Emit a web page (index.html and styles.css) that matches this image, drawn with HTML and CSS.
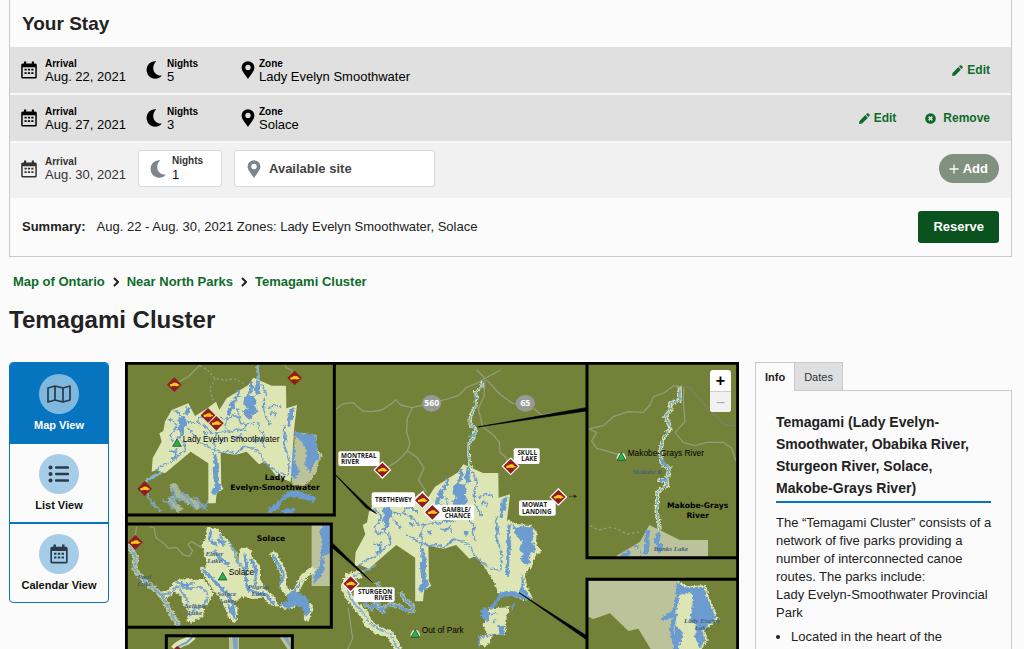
FILE: index.html
```html
<!DOCTYPE html>
<html lang="en">
<head>
<meta charset="utf-8">
<meta name="viewport" content="width=device-width, initial-scale=1">
<title>Temagami Cluster</title>
<link rel="stylesheet" href="styles.css">
</head>
<body>
<svg class="sprite" aria-hidden="true">
  <symbol id="i-cal" viewBox="0 0 16 18">
    <path fill-rule="evenodd" d="M3 .500h2.200V2.500h5.600V.500H13v2h1.300A1.500 1.500 0 0 1 15.800 4v12a1.500 1.500 0 0 1-1.500 1.500H1.700A1.500 1.500 0 0 1 .200 16V4a1.500 1.500 0 0 1 1.500-1.500H3zM1.700 6.300V16h12.600V6.300z"/>
    <path d="M3.500 7.800h2.200v1.800H3.500zm3.400 0h2.200v1.800H6.900zm3.400 0h2.200v1.800h-2.200zM3.500 11.200h2.200V13H3.500zm3.400 0h2.200V13H6.900zm3.400 0h2.200V13h-2.200z"/>
  </symbol>
  <symbol id="i-moon" viewBox="0 0 16 18"><path d="M10.300.300C4.800-.400.600 3.800.600 9c0 5 3.900 8.700 8.500 8.700 2.800 0 5.100-1.100 6.700-3.200-7.600.900-11.800-8.300-5.500-14.200z"/></symbol>
  <symbol id="i-pin" viewBox="0 0 14 18"><path fill-rule="evenodd" d="M7 .200a6.400 6.400 0 0 1 6.400 6.400C13.400 10.200 10 13.300 7 18 4 13.300.600 10.200.600 6.600A6.400 6.400 0 0 1 7 .200zm0 3.600a2.700 2.700 0 1 0 0 5.400 2.700 2.700 0 0 0 0-5.400z"/></symbol>
  <symbol id="i-pen" viewBox="0 0 12 12"><path d="M0 12l.600-3.400L6.900 2.300 9.700 5.100 3.400 11.400zM7.700 1.500l.900-.900a1.300 1.300 0 0 1 1.800 0l1 1a1.300 1.300 0 0 1 0 1.800l-.900.900z"/></symbol>
  <symbol id="i-x" viewBox="0 0 12 12"><circle cx="6" cy="6" r="5.800"/><path d="M4 4l4 4M8 4l-4 4" stroke="#e0e0e0" stroke-width="1.800"/></symbol>
</svg>

<section class="stay">
  <h2 class="stay-title">Your Stay</h2>
  <div class="row">
    <div class="cell"><svg class="ico16"><use href="#i-cal"/></svg><div class="pair"><b>Arrival</b><span>Aug. 22, 2021</span></div></div>
    <div class="cell nights"><svg class="ico16"><use href="#i-moon"/></svg><div class="pair"><b>Nights</b><span>5</span></div></div>
    <div class="cell zone"><svg class="ico14"><use href="#i-pin"/></svg><div class="pair"><b>Zone</b><span>Lady Evelyn Smoothwater</span></div></div>
    <div class="actions"><button class="link" type="button"><svg><use href="#i-pen"/></svg>Edit</button></div>
  </div>
  <div class="row">
    <div class="cell"><svg class="ico16"><use href="#i-cal"/></svg><div class="pair"><b>Arrival</b><span>Aug. 27, 2021</span></div></div>
    <div class="cell nights"><svg class="ico16"><use href="#i-moon"/></svg><div class="pair"><b>Nights</b><span>3</span></div></div>
    <div class="cell zone"><svg class="ico14"><use href="#i-pin"/></svg><div class="pair"><b>Zone</b><span>Solace</span></div></div>
    <div class="actions"><button class="link" type="button"><svg><use href="#i-pen"/></svg>Edit</button><button class="link remove" type="button"><svg><use href="#i-x"/></svg>Remove</button></div>
  </div>
  <div class="row draft">
    <div class="cell"><svg class="ico16"><use href="#i-cal"/></svg><div class="pair"><b>Arrival</b><span>Aug. 30, 2021</span></div></div>
    <div class="field nights-field"><svg class="ico16"><use href="#i-moon"/></svg><div class="pair"><label for="nights">Nights</label><input id="nights" type="text" value="1"></div></div>
    <button class="field site-field" type="button"><svg class="ico14"><use href="#i-pin"/></svg>Available site</button>
    <button class="add" type="button"><svg viewBox="0 0 10 10"><path d="M5 .500v9M.500 5h9" stroke="#fff" stroke-width="1.300"/></svg>Add</button>
  </div>
  <div class="summary">
    <p><b>Summary:</b><span>Aug. 22 - Aug. 30, 2021 Zones: Lady Evelyn Smoothwater, Solace</span></p>
    <button class="reserve" type="button">Reserve</button>
  </div>
</section>

<nav class="crumbs" aria-label="Breadcrumb">
  <a href="#ontario">Map of Ontario</a>
  <svg viewBox="0 0 6 10"><path d="M1 1l4 4-4 4"/></svg>
  <a href="#north">Near North Parks</a>
  <svg viewBox="0 0 6 10"><path d="M1 1l4 4-4 4"/></svg>
  <a href="#temagami">Temagami Cluster</a>
</nav>
<h1>Temagami Cluster</h1>

<main class="content">
  <div class="views">
    <button class="view active" type="button"><span class="disc"><svg viewBox="0 0 24 18"><path d="M1 3l7-2 8 2 7-2v14l-7 2-8-2-7 2zM8 1v14M16 3v14" fill="none" stroke="#2b3a47" stroke-width="1.700" stroke-linejoin="round"/></svg></span>Map View</button>
    <button class="view" type="button"><span class="disc"><svg viewBox="0 0 24 18"><g fill="#2b3a47"><circle cx="3.500" cy="2.500" r="2"/><circle cx="3.500" cy="9" r="2"/><circle cx="3.500" cy="15.500" r="2"/><rect x="8" y="1.300" width="14" height="2.500" rx="1"/><rect x="8" y="7.800" width="14" height="2.500" rx="1"/><rect x="8" y="14.300" width="14" height="2.500" rx="1"/></g></svg></span>List View</button>
    <button class="view" type="button"><span class="disc"><svg class="cal"><use href="#i-cal"/></svg></span>Calendar View</button>
  </div>

  <div class="map">
    <svg class="map-art" viewBox="0 0 1842 861" role="img" aria-label="Temagami Cluster map">
      <defs>
        <filter id="shore" x="-5%" y="-5%" width="110%" height="110%" color-interpolation-filters="sRGB"><feTurbulence type="fractalNoise" baseFrequency=".12" numOctaves="2" seed="4"/><feDisplacementMap in="SourceGraphic" scale="14" xChannelSelector="R" yChannelSelector="G"/></filter>
        <symbol id="access" viewBox="-24 -24 48 48" overflow="visible">
          <path d="M0-22 22 0 0 22-22 0z" fill="#911b1f"/>
          <path d="M-14 1q2-4 6-3 5-6 12-4 5 0 6 4l5 2v3h-5l-2 3-3-2H-6l-3 2-3-2z" fill="#f8cc16"/>
        </symbol>
        <symbol id="tri" viewBox="-20 -20 40 40" overflow="visible">
          <path d="M-8-10h16l6 12v9h-28V2z" fill="#d9efd0"/>
          <path d="M0-12 13 11H-13z" fill="#2bb04b" stroke="#12321a" stroke-width="2"/>
        </symbol>
        <path id="land" d="M400 68 455 92H498L499 160 531 150 522 225 512 380 470 365 440 325 430 322 417 328 380 290 345 300 302 292 304 390 310 402 290 415 287 445H265V325L212 290 135 355 110 345 95 350 98 310 125 260 118 235 130 228 135 200 155 165 205 145 225 183 262 160 288 140 298 165 320 130 385 90z"/>
        <g id="lakes" fill="#6b9bcf" stroke="#6b9bcf" filter="url(#shore)">
          <path d="M372 128 385 120 404 124 410 142 404 150 412 172 398 180 390 196 378 186 366 168 384 160 370 148zM386 84 398 76 400 96 396 114 384 118 388 100zM410 76 422 88 416 104 420 116 408 120 404 100zM332 138 346 134 348 158 336 166 334 178 320 184 318 168 328 158zM174 192 184 184 196 188 202 210 190 222 182 238 170 222 178 210zM198 154 210 160 204 182 192 178zM508 165 524 158 520 190 508 204 504 190zM278 336 292 330 296 345 294 362 286 385 280 370zM284 388 296 384 308 396 300 408 290 410 282 422 276 410zM400 250 412 252 408 268z" stroke="none"/>
          <g fill="none" stroke-width="4">
            <path d="M160 165 175 172 190 192 216 205 238 205 260 216 268 230 286 236 308 228 330 232 350 222 372 226 380 206 404 205M140 190 158 196 170 212 162 230 150 240 160 262 176 254 190 258 196 285 178 300 160 318 130 330 110 345M350 160 362 188 360 205 378 208M425 88 440 120 430 140 432 170 440 190 452 210M290 236 280 262 286 276 280 300 284 330M300 190 320 192 342 180 360 190M240 262 258 272 276 282 302 292 325 288 345 298 360 285 380 276 400 280 420 292 432 320 455 340 470 350 500 362M444 162 455 152 474 150 484 158M450 178 458 170 470 175 462 186M412 200 418 225 432 238 425 255 432 276M232 200 238 188 250 184 270 200M325 190 315 210 322 228M205 220 215 232 226 244M498 210 490 225 500 245 490 262 500 290 508 310 505 360M335 245 350 250 362 240 370 258M148 285 160 290 172 282"/>
          </g>
          <g fill="none" stroke-width="8"><path d="M190 185 184 215 190 235 175 250M392 122 388 158M284 300 290 320 288 345 292 400M170 290 165 305 158 312M516 165 510 190 506 215M352 105 356 122 345 135M250 232 262 238M375 270 362 285M300 250 312 258M492 235 496 262"/></g>
        </g>
      </defs>
      <rect width="1842" height="861" fill="#748139"/>

      <!-- Central map -->
      <g class="road" transform="translate(615 -21)">
        <path d="M15 165 40 146 70 143 98 168 125 170 155 165 185 146 197 134 212 150 245 158 280 150 345 134 385 122 408 98 440 85 465 70 440 45M465 70 512 45M247 158 232 190 230 230 240 265 232 288 200 320 175 335M232 288 262 308 282 340 265 375 290 412M465 75 462 125 445 160 458 215 490 240 508 262 510 292 530 310 530 335"/>
        <path d="M470 75 512 120 548 145 600 150 634 180 670 175"/>
        <path d="M55 760 62 810 68 850 52 885"/>
      </g>
      <g transform="translate(615 -21)" fill="none" filter="url(#shore)"><path d="M458 78 455 95 437 112 440 130 437 155 422 180 420 212 438 222 430 250 414 268 415 300 422 345" stroke="#dde5b5" stroke-width="10"/><path d="M458 78 455 95 437 112 440 130 437 155 422 180 420 212 438 222 430 250 414 268 415 300 422 345M415 243H430" stroke="#6fa5c4" stroke-width="4"/></g>
      <g transform="translate(615 414)">
        <path filter="url(#shore)" d="M540 62 560 72 600 75 620 95 618 130 636 155 618 165 612 185 605 200 585 222 592 262 610 298 580 300 540 285 505 280 492 245 450 182 500 60z" fill="#dde5b5"/>
        <path filter="url(#shore)" d="M545 70 560 85 580 78 606 84 614 100 606 125 616 150 598 165 600 188 585 196 572 180 578 160 568 145 578 126 558 108zM532 75 542 70 540 110 545 130 538 180 536 230 526 222 530 150zM574 220 582 240 580 262 608 300 588 292 566 280 575 255z" fill="#6b9bcf"/>
        <path filter="url(#shore)" d="M475 325 540 322 530 350 528 402 490 405 470 440 445 435 450 408 470 400 458 375z" fill="#dde5b5"/>
        <path filter="url(#shore)" d="M452 330 470 322 480 345 476 368 452 350zM505 375 524 378 522 405 508 403zM475 325 500 298 510 278 535 272 560 275 575 285 608 295 590 300 545 288 518 290 500 310 488 330zM540 318 555 310 548 330z" fill="#6b9bcf"/>
        <path filter="url(#shore)" d="M445 435 450 412 490 404M485 345l15-8M490 370l8-15" fill="none" stroke="#6b9bcf" stroke-width="5"/>
        <g filter="url(#shore)" fill="none"><path d="M92 222 55 232 45 262 60 292 80 318 105 345 115 372 145 392 180 402 205 450" stroke="#dde5b5" stroke-width="24"/><path d="M140 195 70 228 48 245 60 292 80 318 108 350 118 368 150 390 180 400 205 450" stroke="#7fabc9" stroke-width="5"/><path d="M100 310 125 320 145 305 155 330 180 312 210 320 235 335 250 330 245 312 225 300 212 275M140 245 150 262M120 330 135 318 165 340" stroke="#b9c6a0" stroke-width="12"/><path d="M100 310 125 320 145 305 155 330 180 312 210 320 235 335 250 330 245 312 225 300 212 275M140 245 150 262M120 330 135 318 165 340" stroke="#6b9bcf" stroke-width="7"/></g>
      </g>
      <g transform="translate(587 233) scale(1.070 1.090)"><use href="#land" fill="#dde5b5"/><use href="#lakes"/></g>
      <path d="M1058 195 1383 137V147z" stroke="#000" stroke-width="2"/>
      <path d="M628 335 728 432 755 455 724 438zM620 541 742 661 616 552zM1182 692 1383 820V832z" stroke="#000" stroke-width="2"/>
      <path d="M1332 403h20M1347 399l8 4-8 4z" stroke="#333" stroke-width="2"/>
      <g fill="#999a96"><ellipse cx="920" cy="124" rx="29" ry="25"/><ellipse cx="1201" cy="124" rx="29" ry="25"/></g>
      <g class="road-no"><text x="920" y="133">560</text><text x="1201" y="133">65</text></g>
      <g fill="#fff">
        <rect x="640" y="268" width="124" height="44" rx="6"/><rect x="1166" y="259" width="78" height="47" rx="6"/><rect x="740" y="391" width="130" height="44" rx="6"/><rect x="920" y="428" width="127" height="46" rx="6"/><rect x="1182" y="415" width="110" height="46" rx="6"/><rect x="686" y="676" width="123" height="44" rx="6"/>
        <path d="M772 297 799 324 772 351 745 324zM1157 286 1184 313 1157 340 1130 313zM892 388 919 415 892 442 865 415zM922 424 949 451 922 478 895 451zM1300 378 1327 405 1300 432 1273 405zM677 638 704 665 677 692 650 665z"/>
      </g>
      <g class="sign">
        <text x="648" y="287">MONTREAL</text><text x="648" y="307">RIVER</text>
        <text x="1236" y="278" text-anchor="end">SKULL</text><text x="1236" y="298" text-anchor="end">LAKE</text>
        <text x="750" y="420">TRETHEWEY</text>
        <text x="1037" y="449" text-anchor="end">GAMBLE/</text><text x="1037" y="469" text-anchor="end">CHANCE</text>
        <text x="1191" y="436">MOWAT</text><text x="1191" y="456">LANDING</text>
        <text x="802" y="695" text-anchor="end">STURGEON</text><text x="802" y="715" text-anchor="end">RIVER</text>
      </g>
      <use href="#access" x="748" y="300" width="48" height="48"/><use href="#access" x="1133" y="289" width="48" height="48"/><use href="#access" x="868" y="391" width="48" height="48"/><use href="#access" x="898" y="427" width="48" height="48"/><use href="#access" x="1276" y="381" width="48" height="48"/><use href="#access" x="653" y="641" width="48" height="48"/>

      <!-- Lady Evelyn-Smoothwater inset -->
      <rect x="3" y="3" width="625" height="456" fill="#748139"/>
      <g transform="translate(-15 -21)">
        <g class="road"><path d="M163 88 205 65 240 30M495 30 498 38 515 45 518 65"/><path d="M240 32 262 45 285 70 315 75 345 72 370 85M285 70 270 100 280 140" stroke-dasharray="7 6"/></g>
        <g filter="url(#shore)"><path d="M525 230 590 240 590 280 608 300 596 320 590 350 575 375 550 395 515 385z" fill="#bcc39a"/><path d="M525 225 552 240 575 234 588 244 592 285 598 305 582 325 572 350 555 335 560 290 548 262 522 240zM516 270 526 285 522 315 538 350 528 372 514 365zM505 412 520 405 545 410 590 430 580 442 540 430 510 425 488 440 478 455 465 470 442 472 446 460 465 448 485 430 492 418zM490 464 530 460 520 475 485 475z" fill="#6b9bcf"/>
          <g fill="none"><path d="M150 400 165 395 175 420 200 430 225 445 235 460M150 425 165 450 182 468M195 420 210 445" stroke="#a9b998" stroke-width="18"/><path d="M80 415 90 435 105 452 125 470M128 438 145 440 160 465M155 400 168 430 200 440M180 410 205 430 225 460M225 425 240 445 262 465M150 425 172 450M235 458 260 448 272 435 275 420" stroke="#7fa3bd" stroke-width="7"/><path d="M75 378 105 362 125 352 140 335M412 30 415 75" stroke="#89b3cd" stroke-width="9"/></g></g>
        <use href="#land" fill="#dde5b5"/><use href="#lakes"/>
      </g>
      <use href="#access" x="124" y="44" width="48" height="48"/><use href="#access" x="485" y="24" width="48" height="48"/><use href="#access" x="225" y="136" width="48" height="48"/><use href="#access" x="250" y="160" width="48" height="48"/><use href="#access" x="35" y="356" width="48" height="48"/>
      <g class="title"><text x="450" y="353">Lady</text><text x="450" y="383">Evelyn-Smoothwater</text></g>

      <!-- Solace inset -->
      <rect x="3" y="486" width="616" height="310" fill="#748139"/>
      <g transform="translate(-15 459)">
        <g class="road"><path d="M88 35 102 38 108 68 135 88 145 100 170 97 190 120 208 124 218 108 204 88 215 80 245 98 268 96M50 35 45 65"/></g>
        <path d="M575 30H635V213H575z" fill="#bcc39a"/>
        <g filter="url(#shore)"><path d="M608 30H632V115L605 125 612 140 610 170 585 205 578 190 600 150 605 70 598 50z" fill="#6b9bcf"/>
          <path d="M265 42 290 45 300 62 320 78 345 115 350 145 360 155 362 110 375 100 388 108 395 130 415 155 415 190 430 225 460 250 470 270 450 265 430 240 400 248 365 240 350 252 325 258 348 280 345 318 330 305 315 265 290 232 268 200 245 160 265 165 262 130 250 85 262 75zM170 200 200 195 225 200 250 198 265 220 275 235 262 260 248 275 245 300 215 318 205 315 210 290 190 260 190 240 165 225z" fill="#dde5b5" stroke="#dde5b5" stroke-width="10" stroke-linejoin="round"/>
          <g fill="none" stroke-linejoin="round" stroke-linecap="round"><path d="M460 118 480 150 492 180 488 215 510 240M490 272 520 272 512 248 535 215 550 185 575 165M530 255 570 275 560 310M120 240 150 235 165 210" stroke="#dde5b5" stroke-width="18"/><path d="M29 95 48 130 42 160 70 195 125 240 150 290 173 326" stroke="#bcc6a0" stroke-width="16"/>
          <path d="M29 95 48 130 42 160 70 195 125 240 150 290 173 326M120 240 150 235 170 215 200 222 240 215 255 225 262 240M210 300 225 280 250 275 262 250M170 200 190 212 220 205M180 225 200 250 205 280M330 85 345 110 350 140 372 160M300 60 315 85" stroke="#7ba6c6" stroke-width="6"/>
          <path d="M250 165 275 190 300 215 320 235 335 255 345 310M285 110 300 130 325 148M375 120 380 150 376 185 385 225 415 235 440 240 460 265M395 135 408 165 408 205M272 50 268 75 290 90M460 122 480 155 490 180 482 205M295 75 310 90" stroke="#6b9bcf" stroke-width="9"/></g>
          <path d="M478 268 505 258 500 240 525 225 540 238 560 245 568 265 572 290 555 308 550 285 525 268 510 285zM505 245 550 190 530 225zM320 265 340 285 342 308 328 290zM182 200 208 208 205 220 185 214z" fill="#6b9bcf"/></g>
      </g>
      <use href="#access" x="7" y="517" width="48" height="48"/>
      <g class="title"><text x="438" y="536">Solace</text></g>
      <g class="lake"><text x="268" y="583">Elmer</text><text x="268" y="604">Lake</text><text x="58" y="652">Paul</text><text x="58" y="673">Lake</text><text x="305" y="703">Solace</text><text x="305" y="724">Lake</text><text x="401" y="681">Pilgrim</text><text x="401" y="702">Lake</text><text x="210" y="739">Selkirk</text><text x="210" y="760">Lake</text></g>

      <!-- Lower inset -->
      <rect x="124" y="821" width="378" height="60" fill="#748139"/>
      <path d="M147 861Q160 845 185 838L205 822" stroke="#dde5b5" stroke-width="22" fill="none"/><path d="M155 861Q165 848 185 842L205 822" stroke="#6b9bcf" stroke-width="6" fill="none"/>
      <path d="M312 822h30v40h-30zM462 822h38v40h-12z" fill="#bcc39a"/><path d="M322 822h16v40h-12zM472 822h16l12 40z" fill="#7aa4c4"/><path d="M147 861l10-10 10 10z" fill="#911b1f"/>

      <!-- Makobe-Grays inset -->
      <g transform="translate(1365 -21)">
        <path d="M20 25H475V608H20z" fill="#748139"/>
        <g class="road"><path d="M25 222 70 212 100 185 145 170 190 172 210 150 220 125 255 112 280 92 300 95M25 222 50 232 35 258 50 280 80 288 125 302M312 95 310 140 315 200 285 232 310 262 345 272 380 262 430 262 455 280 468 318"/><path class="rail" d="M310 95 330 98 355 130 410 185 435 210 468 212"/><path class="ties" d="M310 95 330 98 355 130 410 185 435 210 468 212"/><path d="M30 512 55 525 85 518 110 520 140 538 180 530" stroke-dasharray="8 7"/></g>
        <path d="M100 608 180 560 208 510 300 555H384V608z" fill="#bcc39a"/>
        <g filter="url(#shore)" fill="none" stroke-linejoin="round"><path d="M299 95 300 135 270 145 272 165 256 185 272 220 250 250 240 290 245 325 268 340 260 375 262 390 232 410 230 470 240 525M262 340H275M258 375H232" stroke="#dde5b5" stroke-width="12"/><path d="M299 100 300 135 270 145 272 165 256 185 272 220 250 250 240 290 245 325 268 340 260 375 262 390 232 410 230 470 240 525M262 340H275M258 375H235" stroke="#78a9bf" stroke-width="5"/><path d="M242 312 260 336M238 375H258" stroke="#6b9bcf" stroke-width="7"/><path d="M204 525 200 550 202 570 196 598M238 535 228 560 242 575 235 590M125 605 150 590" stroke="#6b9bcf" stroke-width="14"/><path d="M160 572 175 577M178 590 185 600" stroke="#6b9bcf" stroke-width="6"/></g>
        <g class="title"><text x="353" y="458">Makobe-Grays</text><text x="353" y="488">River</text></g>
        <g class="lake"><text x="204" y="358">Makobe R.</text><text x="273" y="588">Banks Lake</text></g>
      </g>

      <!-- Lady Evelyn Lake inset -->
      <g transform="translate(1365 564)">
        <path d="M20 88H475V320H20z" fill="#748139"/>
        <path d="M20 92H300L290 297H212L175 236 145 243 90 190 40 207 20 198z" fill="#bcc39a"/>
        <g filter="url(#shore)"><path d="M295 98 325 112 375 108 385 145 400 175 412 205 390 225 370 240 380 270 360 300H285L280 240 290 190z" fill="#6b9bcf" stroke="#dde5b5" stroke-width="6"/><path d="M298 135 335 125 338 165 330 210 350 225 345 260 360 300H295L310 250 288 225 292 170z" fill="#dde5b5"/><path d="M295 98 290 160 280 185 248 208 285 195 275 240 288 300" fill="none" stroke="#6b9bcf" stroke-width="11"/></g>
        <g class="lake"><text x="366" y="219">Lady Evelyn</text><text x="366" y="240">Lake</text></g>
      </g>

      <!-- Frames -->
      <g fill="none" stroke="#000" stroke-width="9">
        <path d="M4 861V4H1838V861M4 459H628V4M4 486H619V796H4M124 861V821H502V861M1838 587H1386V4M1386 861V652H1838"/>
      </g>
      <use href="#tri" x="136" y="222" width="40" height="40"/><use href="#tri" x="273" y="623" width="40" height="40"/><use href="#tri" x="851" y="795" width="40" height="40"/><use href="#tri" x="1469" y="264" width="40" height="40"/>
      <g class="place"><text x="173" y="240">Lady Evelyn Smoothwater</text><text x="311" y="639">Solace</text><text x="890" y="813">Out of Park</text><text x="1508" y="281">Makobe-Grays River</text></g>
    </svg>
    <div class="zoom"><button type="button" aria-label="Zoom in">+</button><button type="button" aria-label="Zoom out" disabled>−</button></div>
  </div>

  <aside class="side">
    <div class="tabs" role="tablist"><button class="tab on" role="tab" aria-selected="true" type="button">Info</button><button class="tab" role="tab" aria-selected="false" type="button">Dates</button></div>
    <div class="panel">
      <h2>Temagami (Lady Evelyn-Smoothwater, Obabika River, Sturgeon River, Solace, Makobe-Grays River)</h2>
      <p>The “Temagami Cluster” consists of a network of five parks providing a number of interconnected canoe routes. The parks include:<br>Lady Evelyn-Smoothwater Provincial Park</p>
      <ul><li>Located in the heart of the</li></ul>
    </div>
  </aside>
</main>
</body>
</html>
```

FILE: styles.css
```css
* { box-sizing: border-box; }
body {
  margin: 0;
  padding: 0 12px 0 9px;
  height: 100vh;
  overflow: hidden;
  display: flex;
  flex-direction: column;
  background: #fbfbfb;
  color: #222;
  font: 13px/16px "Liberation Sans", Arial, sans-serif;
}
h1, h2, p, ul { margin: 0; }
button, input { font: inherit; color: inherit; }
button { margin: 0; padding: 0; border: 0; background: none; cursor: pointer; }
svg { display: block; flex: none; }
.sprite { position: absolute; width: 0; height: 0; }

.stay { border: 1px solid #c8cacb; border-top: 0; flex: none; }
.stay-title { padding: 12px; font-size: 19px; line-height: 23px; }
.row {
  display: grid;
  grid-template-columns: 117px 96px 1fr auto;
  align-items: center;
  min-height: 48px;
  padding: 0 12px 0 11px;
  border-bottom: 2px solid #f8f8f8;
  background: #e0e0e0;
  color: #000;
}
.cell { display: flex; align-items: center; gap: 8px; }
.nights { padding-left: 8px; gap: 5px; }
.zone { padding-left: 7px; gap: 4px; }
.ico16 { width: 16px; height: 18px; }
.ico14 { width: 14px; height: 18px; }
.pair { display: flex; flex-direction: column; line-height: 13px; }
.pair b, .pair label { font-size: 10px; line-height: 12px; font-weight: bold; }
.actions { display: flex; gap: 29px; padding-right: 9px; }
.link { display: flex; align-items: center; gap: 4px; font-size: 12px; font-weight: bold; color: #0f6b2c; }
.link svg { width: 11px; height: 11px; fill: currentColor; }
.remove { gap: 7px; }
.draft { padding-top: 7px; padding-bottom: 11px; border: 0; background: #f1f1f1; color: #333; }
.draft .cell svg { fill: #333; }
.field { display: flex; align-items: center; height: 37px; border: 1px solid #d8d9da; border-radius: 3px; background: #fff; }
.field svg { fill: #7e8489; }
.nights-field { margin-right: 12px; padding-left: 11px; gap: 6px; }
.nights-field .pair { flex: 1; min-width: 0; }
.nights-field input { width: 100%; height: 15px; padding: 0; border: 0; background: none; color: #111; }
.site-field { width: 201px; padding-left: 12px; gap: 8px; font-weight: bold; color: #444; }
.add { display: flex; align-items: center; gap: 4px; height: 29px; padding: 0 11px 0 10px; border-radius: 15px; background: #80927f; color: #fff; font-weight: bold; }
.add svg { width: 10px; height: 10px; }
.summary { display: flex; align-items: center; justify-content: space-between; padding: 13px 12px; color: #222; }
.summary b { margin-right: 11px; }
.reserve { height: 32px; padding: 0 15px; border-radius: 3px; background: #0a531f; color: #fff; font-weight: bold; }

.crumbs { display: flex; align-items: center; gap: 8px; flex: none; margin: 17px 4px 0; font-weight: bold; }
.crumbs a { color: #0f6b2c; text-decoration: none; }
.crumbs svg { width: 6px; height: 10px; fill: none; stroke: #222; stroke-width: 2px; }
h1 { flex: none; margin: 16px 0 28px; font-size: 24px; line-height: 28px; }

.content { flex: 1; min-height: 0; display: grid; grid-template-columns: 100px minmax(0, 1fr) 257px; gap: 16px; }
.views { align-self: start; display: flex; flex-direction: column; border: 1px solid #0774bf; border-radius: 4px; overflow: hidden; }
.view { display: flex; flex-direction: column; align-items: center; gap: 4px; padding: 11px 0 10px; font-size: 11px; line-height: 14px; font-weight: bold; color: #111; }
.view + .view { padding-top: 10px; border-top: 2px solid #0774bf; }
.view.active { background: #0774bf; color: #fff; }
.disc { display: grid; place-items: center; width: 40px; height: 40px; border-radius: 50%; background: #a5cde7; }
.active .disc { background: #7fb8de; }
.disc svg { width: 24px; height: 18px; }
.disc .cal { width: 18px; height: 20px; fill: #2b3a47; }

.map { position: relative; overflow: hidden; background: #748139; }
.map-art { width: 100%; height: auto; }
.road path { fill: none; stroke: #959a78; stroke-width: 4px; stroke-linejoin: round; }
.road .rail { stroke: #7d826c; stroke-width: 3px; }
.road .ties { stroke: #7d826c; stroke-width: 10px; stroke-dasharray: 2 9; }
.title text { font: bold 23px "DejaVu Sans", sans-serif; text-anchor: middle; fill: #000; }
.place text { font: 25px "Liberation Sans", Arial, sans-serif; fill: #000; }
.sign text { font: bold 19px "Open Sans", sans-serif; fill: #222; }
.road-no text { font: bold 26px "Open Sans", sans-serif; text-anchor: middle; fill: #fff; }
.lake text { font: italic bold 21px "Liberation Serif", serif; text-anchor: middle; fill: #44617a; }
.zoom { position: absolute; top: 8px; right: 8px; display: flex; flex-direction: column; width: 21px; border-radius: 3px; overflow: hidden; background: #fff; }
.zoom button { height: 21px; font-size: 16px; line-height: 21px; font-weight: bold; color: #000; }
.zoom button:disabled { background: #f1f1f1; color: #aaa; font-weight: normal; border-top: 1px solid #ccc; }

.side { display: flex; flex-direction: column; min-height: 0; }
.tabs { display: flex; flex: none; }
.tab { height: 28px; padding: 0 9px; border: 1px solid #c8cacb; border-bottom: 0; border-left: 0; background: #dedfe1; font-size: 11px; color: #333; }
.tab.on { position: relative; height: 29px; margin-bottom: -1px; border-left: 1px solid #c8cacb; background: #fbfbfb; font-weight: bold; color: #222; }
.panel { flex: 1; min-height: 0; overflow: hidden; padding: 20px 16px 0 20px; border: 1px solid #c8cacb; border-bottom: 0; line-height: 18px; }
.panel h2 { margin: 0 4px 11px 0; padding-bottom: 2px; border-bottom: 2px solid #0774bf; font-size: 14px; line-height: 22px; }
.panel ul { margin-top: 6px; padding-left: 15px; }
```
